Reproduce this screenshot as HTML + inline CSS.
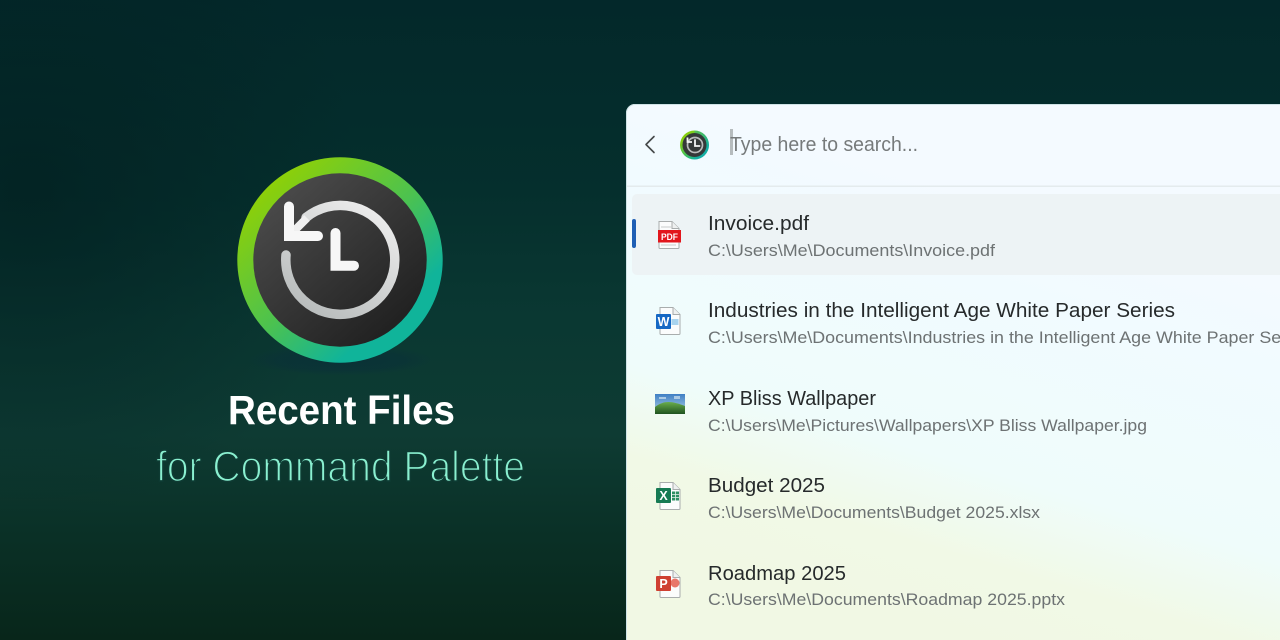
<!DOCTYPE html>
<html lang="en">
<head>
<meta charset="utf-8">
<title>Recent Files for Command Palette</title>
<style>
html,body{margin:0;padding:0;width:1280px;height:640px;overflow:hidden;background:#04282a}
svg{display:block}
text{font-family:"Liberation Sans",sans-serif}
.t{font-size:20px;fill:#262a2b}
.s{font-size:16.5px;fill:#6d7273}
</style>
</head>
<body>
<svg width="1280" height="640" viewBox="0 0 1280 640" xmlns="http://www.w3.org/2000/svg">
<defs>
<linearGradient id="bg" x1="0" y1="0" x2="0" y2="1">
<stop offset="0" stop-color="#03282a"/>
<stop offset=".3" stop-color="#052f2d"/>
<stop offset=".5" stop-color="#0a3832"/>
<stop offset=".68" stop-color="#0e3b33"/>
<stop offset=".84" stop-color="#0a3026"/>
<stop offset="1" stop-color="#08261a"/>
</linearGradient>
<radialGradient id="dl" gradientUnits="userSpaceOnUse" cx="30" cy="190" r="330">
<stop offset="0" stop-color="#021f20" stop-opacity=".7"/>
<stop offset="1" stop-color="#021f20" stop-opacity="0"/>
</radialGradient>
<linearGradient id="ring" x1=".15" y1=".12" x2=".85" y2=".88">
<stop offset="0" stop-color="#8fd006"/>
<stop offset=".5" stop-color="#4cc24f"/>
<stop offset=".85" stop-color="#10b49a"/>
<stop offset="1" stop-color="#10b49a"/>
</linearGradient>
<linearGradient id="disc" x1=".15" y1=".1" x2=".85" y2=".9">
<stop offset="0" stop-color="#4a4a4a"/>
<stop offset="1" stop-color="#202020"/>
</linearGradient>
<linearGradient id="arc" gradientUnits="userSpaceOnUse" x1="380" y1="205" x2="310" y2="315">
<stop offset="0" stop-color="#eeeeee"/>
<stop offset="1" stop-color="#b8bcbc"/>
</linearGradient>
<radialGradient id="shadow" cx=".5" cy=".5" r=".5">
<stop offset="0" stop-color="#0a3038" stop-opacity=".85"/>
<stop offset=".7" stop-color="#0a3038" stop-opacity=".55"/>
<stop offset="1" stop-color="#0a3038" stop-opacity="0"/>
</radialGradient>
<linearGradient id="panel" gradientUnits="userSpaceOnUse" x1="860" y1="620" x2="990" y2="190">
<stop offset="0" stop-color="#f1f8e4"/>
<stop offset=".2" stop-color="#f1f9e6"/>
<stop offset=".4" stop-color="#effcfb"/>
<stop offset=".8" stop-color="#f1fbff"/>
<stop offset="1" stop-color="#f4faff"/>
</linearGradient>
<linearGradient id="sky" x1="0" y1="0" x2="0" y2="1">
<stop offset="0" stop-color="#3f7fc4"/>
<stop offset="1" stop-color="#b5d6e8"/>
</linearGradient>
<linearGradient id="grass" x1="0" y1="0" x2="0" y2="1">
<stop offset="0" stop-color="#6aae4c"/>
<stop offset="1" stop-color="#1f5220"/>
</linearGradient>
<filter id="soft" x="-5%" y="-5%" width="110%" height="110%"><feGaussianBlur stdDeviation=".35"/></filter>
<g id="page">
<path d="M.5 .5H13.5L20.5 7.5V26.5a1 1 0 0 1-1 1H1.500a1 1 0 0 1-1-1Z" fill="#fbfcfc" stroke="#a9adad"/>
<path d="M13.500 .5V7.500H20.500" fill="#eef0f0" stroke="#a9adad"/>
</g>
<clipPath id="tc"><rect x="700" y="190" width="580" height="450"/></clipPath>
</defs>

<rect width="1280" height="640" fill="url(#bg)"/>
<rect width="640" height="520" fill="url(#dl)"/>

<!-- Logo -->
<ellipse cx="340" cy="360" rx="92" ry="15" fill="url(#shadow)"/>
<circle cx="340" cy="260" r="102.700" fill="url(#ring)"/>
<circle cx="340" cy="260" r="86.700" fill="url(#disc)"/>
<path d="M286 255A54.500 54.500 0 1 0 306 217.500" fill="none" stroke="url(#arc)" stroke-width="9.500" stroke-linecap="round"/>
<path d="M307 218L290 235" fill="none" stroke="#f0f0f0" stroke-width="8"/>
<path d="M289 206.500V236H318" fill="none" stroke="#f7f7f7" stroke-width="10" stroke-linecap="round" stroke-linejoin="miter"/>
<path d="M335.500 233V265.700H354" fill="none" stroke="#f7f7f7" stroke-width="10" stroke-linecap="round" stroke-linejoin="miter"/>

<text x="228" y="424" font-size="41" font-weight="700" fill="#ffffff" textLength="227" lengthAdjust="spacingAndGlyphs">Recent Files</text>
<text x="156" y="481" font-size="43" fill="#8af0d0" stroke="#0e3b33" stroke-width="1.600" textLength="369" lengthAdjust="spacingAndGlyphs">for Command Palette</text>

<!-- Panel -->
<path d="M626 640V113a9 9 0 0 1 9-9H1280V640Z" fill="url(#panel)"/>
<path d="M626.500 640V113a8.500 8.500 0 0 1 8.500-8.500H1280" fill="none" stroke="#cfe3e6"/>

<path d="M654 136.500L646 144.500L654 152.500" fill="none" stroke="#454849" stroke-width="1.600" stroke-linecap="round" stroke-linejoin="round"/>

<g filter="url(#soft)">
<circle cx="694.500" cy="145" r="14.500" fill="url(#ring)"/>
<path d="M694.500 130.500A14.500 14.500 0 0 1 694.500 159.500" fill="#1ba7b5" opacity=".35"/>
<circle cx="694.500" cy="145" r="12" fill="#363737"/>
<circle cx="695" cy="145" r="7.500" fill="none" stroke="#b9bcbc" stroke-width="1.700"/>
<path d="M695 140V146H699.500" fill="none" stroke="#f4f4f4" stroke-width="1.800" stroke-linecap="round"/>
<path d="M687.500 137.500V142H692" fill="none" stroke="#f4f4f4" stroke-width="1.800"/>
</g>

<rect x="730" y="129" width="3" height="26" fill="#b6bcbe"/>
<text x="730" y="151" font-size="20.500" fill="#767a7b" textLength="188" lengthAdjust="spacingAndGlyphs">Type here to search...</text>

<rect x="627" y="185.500" width="653" height="1.500" fill="#e4ebed"/>
<path d="M1280 194H637a5 5 0 0 0-5 5V270a5 5 0 0 0 5 5H1280Z" fill="#edf3f5"/>
<rect x="632" y="219" width="4" height="29" rx="2" fill="#1f5fb4"/>

<g filter="url(#soft)">
<!-- PDF -->
<use href="#page" x="658.500" y="221"/>
<path d="M661 227H672M661 245H676" stroke="#c9cccc" stroke-width="1"/>
<rect x="658" y="230" width="23" height="12.500" fill="#e2121f"/>
<text x="669.500" y="240" font-size="9" font-weight="700" fill="#fff" text-anchor="middle" textLength="17" lengthAdjust="spacingAndGlyphs">PDF</text>

<!-- Word -->
<use href="#page" x="659.500" y="307"/>
<rect x="671.500" y="319" width="7" height="6" fill="#a9d4ef"/>
<rect x="656" y="314" width="15" height="15" rx="1" fill="#1867c4"/>
<text x="663.500" y="326" font-size="12.500" font-weight="700" fill="#fff" text-anchor="middle">W</text>

<!-- Image -->
<rect x="655" y="394" width="30" height="20" fill="url(#sky)"/>
<path d="M674 396h6v3h-6zM659 397h7v2h-7z" fill="#cfe3ef" opacity=".7"/>
<path d="M655 407C664 400 672 401 685 406V414H655Z" fill="url(#grass)"/>

<!-- Excel -->
<use href="#page" x="659.500" y="482"/>
<path d="M672 491.500H679V500.500H672Z" fill="#2f8f63"/>
<path d="M672 494.500H679M672 497.500H679M675.500 491.500V500.500" stroke="#e4f2ea" stroke-width=".8"/>
<rect x="656" y="488" width="15" height="15" rx="1" fill="#157a53"/>
<text x="663.500" y="500" font-size="12.500" font-weight="700" fill="#fff" text-anchor="middle">X</text>

<!-- PowerPoint -->
<use href="#page" x="659.500" y="570"/>
<circle cx="675" cy="583" r="4.500" fill="#e8766a"/>
<rect x="656" y="576" width="15" height="15" rx="1" fill="#cf4030"/>
<text x="663.500" y="588" font-size="12.500" font-weight="700" fill="#fff" text-anchor="middle">P</text>
</g>

<g clip-path="url(#tc)">
<text class="t" x="708" y="230" textLength="101" lengthAdjust="spacingAndGlyphs">Invoice.pdf</text>
<text class="s" x="708" y="256" textLength="287" lengthAdjust="spacingAndGlyphs">C:\Users\Me\Documents\Invoice.pdf</text>

<text class="t" x="708" y="317" textLength="467" lengthAdjust="spacingAndGlyphs">Industries in the Intelligent Age White Paper Series</text>
<text class="s" x="708" y="343" textLength="602" lengthAdjust="spacingAndGlyphs">C:\Users\Me\Documents\Industries in the Intelligent Age White Paper Series</text>

<text class="t" x="708" y="405" textLength="168" lengthAdjust="spacingAndGlyphs">XP Bliss Wallpaper</text>
<text class="s" x="708" y="431" textLength="439" lengthAdjust="spacingAndGlyphs">C:\Users\Me\Pictures\Wallpapers\XP Bliss Wallpaper.jpg</text>

<text class="t" x="708" y="492" textLength="117" lengthAdjust="spacingAndGlyphs">Budget 2025</text>
<text class="s" x="708" y="518" textLength="332" lengthAdjust="spacingAndGlyphs">C:\Users\Me\Documents\Budget 2025.xlsx</text>

<text class="t" x="708" y="580" textLength="138" lengthAdjust="spacingAndGlyphs">Roadmap 2025</text>
<text class="s" x="708" y="605" textLength="357" lengthAdjust="spacingAndGlyphs">C:\Users\Me\Documents\Roadmap 2025.pptx</text>
</g>
</svg>
</body>
</html>
